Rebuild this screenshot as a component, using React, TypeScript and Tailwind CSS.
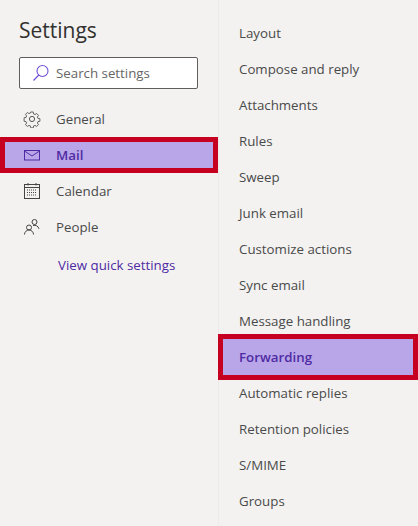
import React from "react";

const Gear = () => (
  <svg width="18" height="18" viewBox="0 0 18 18" fill="none" stroke="#555" strokeWidth="1">
    <circle cx="9" cy="9" r="2.6" />
    <path d="M7.6 1.2h2.8l.4 2.2 1.5.7 1.9-1.2 2 2-1.2 1.9.6 1.5 2.2.4v2.8l-2.2.4-.6 1.5 1.2 1.9-2 2-1.9-1.2-1.5.6-.4 2.2H7.6l-.4-2.2-1.5-.6-1.9 1.2-2-2 1.2-1.9-.6-1.5-2.2-.4V7.6l2.2-.4.6-1.5-1.2-1.9 2-2 1.9 1.2 1.5-.7z" transform="translate(0.9 0.9) scale(0.9)" />
  </svg>
);
const MailIcon = () => (
  <svg width="18" height="14" viewBox="0 0 18 14" fill="none" stroke="#4f2ba3" strokeWidth="1">
    <rect x="1.5" y="2.5" width="15" height="9.5" />
    <path d="M1.5 3l7.5 5 7.500-5" />
  </svg>
);
const CalendarIcon = () => (
  <svg width="18" height="18" viewBox="0 0 18 18" fill="none" stroke="#444" strokeWidth="1">
    <rect x="1.500" y="2.500" width="15" height="14" />
    <path d="M1.500 5.500h15M5 1v2.500M13 1v2.500" />
    <path d="M4 8h10M4 10.500h10M4 13h10" strokeDasharray="1 1" />
  </svg>
);
const PeopleIcon = () => (
  <svg width="18" height="18" viewBox="0 0 18 18" fill="none" stroke="#444" strokeWidth="1">
    <circle cx="6" cy="9.500" r="2.500" />
    <path d="M1.500 16.500c0-2.500 2-4.500 4.500-4.500s4.500 2 4.500 4.500" />
    <circle cx="11.500" cy="4" r="2.500" />
    <path d="M10 7.500c2.800-.8 5.200.6 6 3.300" />
  </svg>
);
const SearchIcon = () => (
  <svg width="18" height="18" viewBox="0 0 18 18" fill="none" stroke="#6f4fd8" strokeWidth="1.100">
    <circle cx="10.500" cy="7" r="5.500" />
    <path d="M6.800 11L1.500 16.500" />
  </svg>
);

const rightItems = [
  "Layout",
  "Compose and reply",
  "Attachments",
  "Rules",
  "Sweep",
  "Junk email",
  "Customize actions",
  "Sync email",
  "Message handling",
  "Forwarding",
  "Automatic replies",
  "Retention policies",
  "S/MIME",
  "Groups",
];

export default function App() {
  return (
    <div className="w-[418px] h-[526px] overflow-hidden flex bg-[#f3f2f1] text-[13.3px] leading-[20px] text-[#4a4a4a] [font-family:'Open_Sans',sans-serif]">
      <div className="w-[218px] shrink-0 flex flex-col pt-[15px]">
        <h1 className="h-[30px] pl-[19px] text-[21px] leading-[30px] font-normal text-[#323130]">Settings</h1>
        <div className="mt-[12px] ml-[19px] w-[179px] h-[32px] flex items-center gap-[6px] pl-[12px] bg-white border border-[#605e5c] rounded-[2px] text-[#666]">
          <SearchIcon />
          <span>Search settings</span>
        </div>
        <div className="mt-[12px] h-[36px] flex items-center">
          <span className="w-[56px] pl-[23px] flex"><Gear /></span>
          <span>General</span>
        </div>
        <div className="h-[36px] flex items-center bg-[#b9a6e8] border-[5px] border-[#c50021] font-semibold text-[#4f2ba3]">
          <span className="w-[51px] pl-[18px] flex"><MailIcon /></span>
          <span>Mail</span>
        </div>
        <div className="h-[36px] flex items-center">
          <span className="w-[56px] pl-[23px] flex"><CalendarIcon /></span>
          <span>Calendar</span>
        </div>
        <div className="h-[36px] flex items-center">
          <span className="w-[56px] pl-[23px] flex"><PeopleIcon /></span>
          <span>People</span>
        </div>
        <div className="h-[40px] pl-[58px] flex items-center text-[#4f2ba3]">View quick settings</div>
      </div>
      <div className="flex-1 flex flex-col pt-[15px] border-l border-[#edebe9]">
        {rightItems.map((t) =>
          t === "Forwarding" ? (
            <div key={t} className="h-[46px] -my-[5px] -ml-px flex items-center pl-[16px] bg-[#b9a6e8] border-[5px] border-[#c50021] font-semibold text-[#4f2ba3]">
              {t}
            </div>
          ) : (
            <div key={t} className="h-[36px] shrink-0 flex items-center pl-[20px]">{t}</div>
          )
        )}
      </div>
    </div>
  );
}
